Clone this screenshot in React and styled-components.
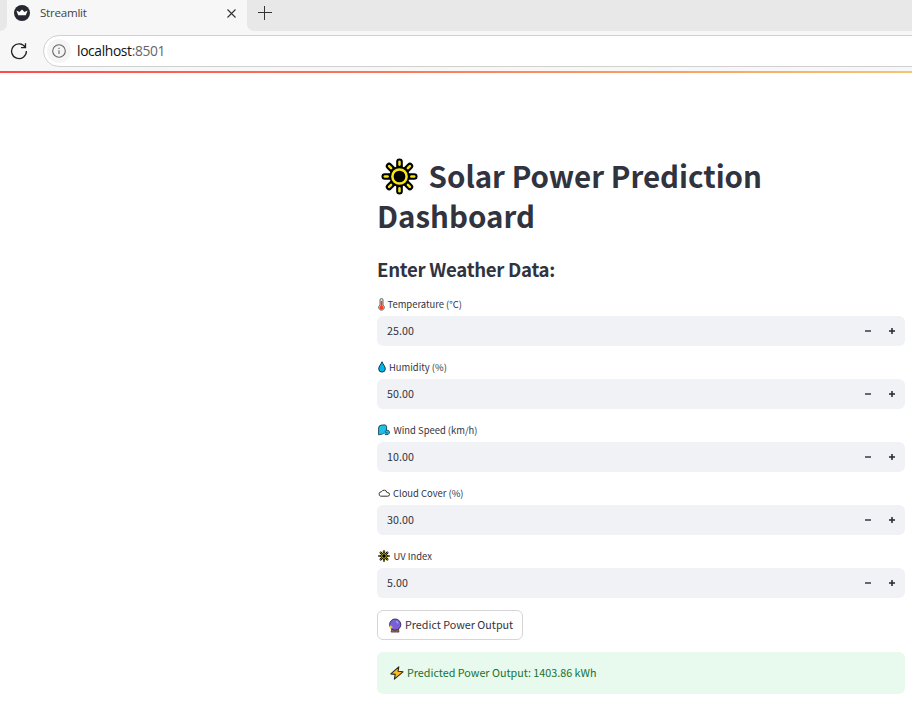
import React from 'react';
import styled, { createGlobalStyle } from 'styled-components';

const GlobalStyle = createGlobalStyle`
  * { box-sizing: border-box; }
  body { margin: 0; background: #fff; overflow: hidden; }
  svg { display: block; flex: none; }
`;

const Page = styled.div`
  width: 912px;
  height: 708px;
  overflow: hidden;
  background: #fff;
  color: #31333f;
  font-family: "Noto Sans CJK SC", "Noto Sans", sans-serif;
`;
const TabStrip = styled.div`
  display: flex;
  height: 31px;
  background: #f7f7f7;
`;
const StripStart = styled.div`
  width: 7px;
  background: #e8e8e8;
  border-bottom-right-radius: 7px;
`;
const Tab = styled.div`
  display: flex;
  align-items: center;
  width: 240px;
  height: 26px;
  padding: 0 11px 0 7px;
  color: #444;
`;
const TabTitle = styled.span`
  flex: 1;
  margin-left: 10px;
  font: 11.6px/18px "Open Sans", sans-serif;
  letter-spacing: -0.25px;
`;
const StripRest = styled.div`
  flex: 1;
  background: #e8e8e8;
  border-bottom-left-radius: 7px;
  padding: 6px 0 0 11px;
`;
const Toolbar = styled.div`
  display: flex;
  align-items: center;
  height: 40px;
  padding-left: 10px;
  background: #f7f7f7;
`;
const AddressBar = styled.div`
  display: flex;
  align-items: center;
  flex: 1;
  height: 32px;
  margin: 0 -20px 0 15px;
  padding-left: 3px;
  border: 1px solid #d0d0d0;
  border-radius: 16px;
  background: #fff;
`;
const InfoBadge = styled.span`
  display: flex;
  align-items: center;
  justify-content: center;
  width: 24px;
  height: 24px;
  border-radius: 50%;
  background: #f5f5f5;
`;
const Address = styled.span`
  margin-left: 6px;
  font: 13.8px/20px "Open Sans", sans-serif;
  letter-spacing: -0.35px;
  color: #111;
`;
const Port = styled.span`
  color: #666;
`;
const Decoration = styled.div`
  height: 2px;
  background: linear-gradient(90deg, #ff4b4b, #fb7a5a 45%, #f6c56f);
`;
const Main = styled.main`
  width: 528px;
  margin-left: 377px;
  padding-top: 82px;
`;
const Title = styled.h1`
  margin: 0;
  height: 80px;
  font-size: 29.5px;
  line-height: 40px;
  font-weight: 700;
`;
const TitleLine = styled.span`
  display: flex;
  align-items: center;
  height: 40px;
  gap: 11px;
  white-space: nowrap;
`;
const SunSlot = styled.span`
  padding: 3px 0 0 3.5px;
`;
const Subtitle = styled.h2`
  margin: 21px 0 11px;
  height: 25px;
  font-size: 18.6px;
  line-height: 25px;
  font-weight: 600;
  letter-spacing: -0.28px;
  white-space: nowrap;
`;
const Field = styled.div`
  height: 63px;
  padding-top: 5px;
`;
const Label = styled.label`
  display: flex;
  align-items: center;
  height: 14px;
  gap: ${(p) => p.$gap};
  margin-bottom: 5px;
  padding-left: ${(p) => p.$inset};
  font-size: 9.42px;
  line-height: 14px;
  white-space: nowrap;
`;
const NumberBox = styled.div`
  display: flex;
  align-items: center;
  height: 30px;
  padding: 0 9px 0 10px;
  border-radius: 6px;
  background: #f0f2f6;
  font-size: 10.7px;
  letter-spacing: 0.05px;
  line-height: 18px;
`;
const Value = styled.span`
  flex: 1;
`;
const Stepper = styled.span`
  display: flex;
  gap: 16px;
`;
const Button = styled.button`
  display: flex;
  align-items: center;
  gap: 3px;
  width: 146px;
  height: 30px;
  margin: 3px 0 12px;
  padding: 0 0 0 10px;
  border: 1px solid #d6d6d9;
  border-radius: 6px;
  background: #fff;
  color: #31333f;
  font: 10.75px/18px "Noto Sans CJK SC", sans-serif;
  white-space: nowrap;
`;
const Alert = styled.div`
  display: flex;
  align-items: center;
  gap: 3px;
  height: 42px;
  padding-left: 13px;
  border-radius: 6px;
  background: #e8f9ee;
  color: #177233;
  font-size: 10.77px;
  line-height: 18px;
  white-space: nowrap;
`;

const rays = [0, 45, 90, 135, 180, 225, 270, 315];

const Sun = ({ size }) => (
  <svg width={size} height={size} viewBox="0 0 38 38">
    {rays.map((a) => (
      <path key={a} d="M19 3.9V9" transform={`rotate(${a} 19 19)`} stroke="#000" strokeWidth="6.8" strokeLinecap="round" />
    ))}
    <circle cx="19" cy="19" r="10.4" fill="#000" />
    {rays.map((a) => (
      <path key={a} d="M19 3.9V6.8" transform={`rotate(${a} 19 19)`} stroke="#f5e51b" strokeWidth="2.6" strokeLinecap="round" />
    ))}
    <circle cx="19" cy="19" r="7.3" fill="#000" stroke="#f5e51b" strokeWidth="2.6" />
  </svg>
);
const Thermometer = () => (
  <svg width="7" height="13" viewBox="0 0 7 13">
    <path d="M2 7V2a1.5 1.5 0 0 1 3 0v5a2.8 2.8 0 1 1-3 0Z" fill="#d5ecf2" stroke="#444" strokeWidth=".8" />
    <path d="M3.5 3V9" stroke="#ef4423" strokeWidth="1.8" />
    <circle cx="3.5" cy="9.7" r="2" fill="#ef4423" />
  </svg>
);
const Drop = () => (
  <svg width="8" height="12" viewBox="0 0 8 12">
    <path d="M4 .8C3 3.5.7 5.3.7 7.8a3.3 3.3 0 0 0 6.6 0C7.3 5.3 5 3.5 4 .8Z" fill="#00b5ee" stroke="#123743" />
  </svg>
);
const Wind = () => (
  <svg width="12" height="12" viewBox="0 0 12 12">
    <path d="M.6 10.8V4Q.8 1.2 3.5 1.1L7 .9q1.6.3 1.6 2.2L8.4 6l2.4.7q.9.9.5 2.5L10 10.6H7L5 9.4l-3 1.4Z" fill="#1fc0e8" />
    <path d="M.6 10.8V4Q.8 1.2 3.5 1.1L7 .9q1.6.3 1.6 2.2L8.4 6l2.4.7q.9.9.5 2.5L10 10.6H7" fill="none" stroke="#174151" strokeWidth=".9" />
    <path d="m.6 10.8 4-.6 1-1.4M8.4 6l-1.2 1.8 1 1.2h1.4" fill="none" stroke="#174151" strokeWidth=".8" />
  </svg>
);
const Cloud = () => (
  <svg width="12" height="8" viewBox="0 0 12 8">
    <path d="M2.7 7.2h6.9a1.8 1.8 0 0 0 .2-3.6H9A3 3 0 0 0 3.4 2.8 2.25 2.25 0 0 0 2.7 7.2Z" fill="#fff" stroke="#333" />
  </svg>
);
const CrystalBall = () => (
  <svg width="14" height="15" viewBox="0 0 14 15">
    <path d="m3.8 10.5-.6 3.6h7.8l-.6-3.6Z" fill="#a66a43" stroke="#3b2a24" strokeWidth=".7" />
    <circle cx="7.2" cy="6.6" r="5.6" fill="#7a60d8" stroke="#292047" strokeWidth=".9" />
    <path d="M8 3.5q1.8.2 2 2" stroke="#8fa0ff" strokeWidth="1.4" fill="none" />
    <path d="m2.9 6.8.6 1.6 1.6.7-1.6.7-.6 1.6-.7-1.6-1.6-.7 1.6-.7Z" fill="#fbe43c" />
  </svg>
);
const Bolt = () => (
  <svg width="14" height="14" viewBox="0 0 14 14">
    <path d="M8.8.8.8 7.9l4.4.5-.8 4.8 8.6-7.4-4.9-.6Z" fill="#fcbc24" stroke="#2a2a25" strokeWidth="1.1" strokeLinejoin="round" />
  </svg>
);
const StreamlitLogo = () => (
  <svg width="16" height="16" viewBox="0 0 16 16">
    <circle cx="8" cy="8" r="8" fill="#262730" />
    <path d="m2.4 5.4 3.1 1.5L8 4.4l2.5 2.5 3.1-1.5-1.8 4.9H4.2Z" fill="#fff" />
  </svg>
);
const Minus = () => (
  <svg width="8" height="8" viewBox="0 0 8 8"><path d="M1 3h6v2H1z" fill="#656772" /></svg>
);
const Plus = () => (
  <svg width="8" height="8" viewBox="0 0 8 8">
    <path d="M1 3h6v2H1zM3 1h2v6H3z" fill="#555762" />
    <path d="M3 3h2v2H3z" fill="#31333f" />
  </svg>
);

const fields = [
  { label: 'Temperature (°C)', value: '25.00', icon: <Thermometer />, inset: '0.5px', gap: '3px' },
  { label: 'Humidity (%)', value: '50.00', icon: <Drop />, inset: '1px', gap: '3px' },
  { label: 'Wind Speed (km/h)', value: '10.00', icon: <Wind />, inset: '1px', gap: '3.5px' },
  { label: 'Cloud Cover (%)', value: '30.00', icon: <Cloud />, inset: '1px', gap: '3px' },
  { label: 'UV Index', value: '5.00', icon: <Sun size={12} />, inset: '1px', gap: '3.5px' },
];

export default function App() {
  return (
    <Page>
      <GlobalStyle />
      <TabStrip>
        <StripStart />
        <Tab>
          <StreamlitLogo />
          <TabTitle>Streamlit</TabTitle>
          <svg width="9" height="9" viewBox="0 0 9 9"><path d="m.5.5 8 8M8.5.5l-8 8" stroke="#333" strokeWidth="1.1" /></svg>
        </Tab>
        <StripRest>
          <svg width="14" height="14" viewBox="0 0 14 14"><path d="M6.5 0v14M0 6.5h14" stroke="#333" /></svg>
        </StripRest>
      </TabStrip>
      <Toolbar>
        <svg width="18" height="18" viewBox="0 0 18 18">
          <path d="M15.4 5.5A7.4 7.4 0 1 0 16.4 9M15.5 1.2v4.5H11" fill="none" stroke="#222" strokeWidth="1.3" />
        </svg>
        <AddressBar>
          <InfoBadge>
            <svg width="14" height="14" viewBox="0 0 14 14">
              <circle cx="7" cy="7" r="6.3" fill="none" stroke="#666" strokeWidth="1.1" />
              <path d="M7 6.2V10M7 3.7v1.2" stroke="#666" strokeWidth="1.1" />
            </svg>
          </InfoBadge>
          <Address>localhost<Port>:8501</Port></Address>
        </AddressBar>
      </Toolbar>
      <Decoration />
      <Main>
        <Title>
          <TitleLine><SunSlot><Sun size={37} /></SunSlot>Solar Power Prediction</TitleLine>
          <TitleLine>Dashboard</TitleLine>
        </Title>
        <Subtitle>Enter Weather Data:</Subtitle>
        {fields.map((f) => (
          <Field key={f.label}>
            <Label $inset={f.inset} $gap={f.gap}>{f.icon}{f.label}</Label>
            <NumberBox>
              <Value>{f.value}</Value>
              <Stepper><Minus /><Plus /></Stepper>
            </NumberBox>
          </Field>
        ))}
        <Button><CrystalBall />Predict Power Output</Button>
        <Alert><Bolt />Predicted Power Output: 1403.86 kWh</Alert>
      </Main>
    </Page>
  );
}
